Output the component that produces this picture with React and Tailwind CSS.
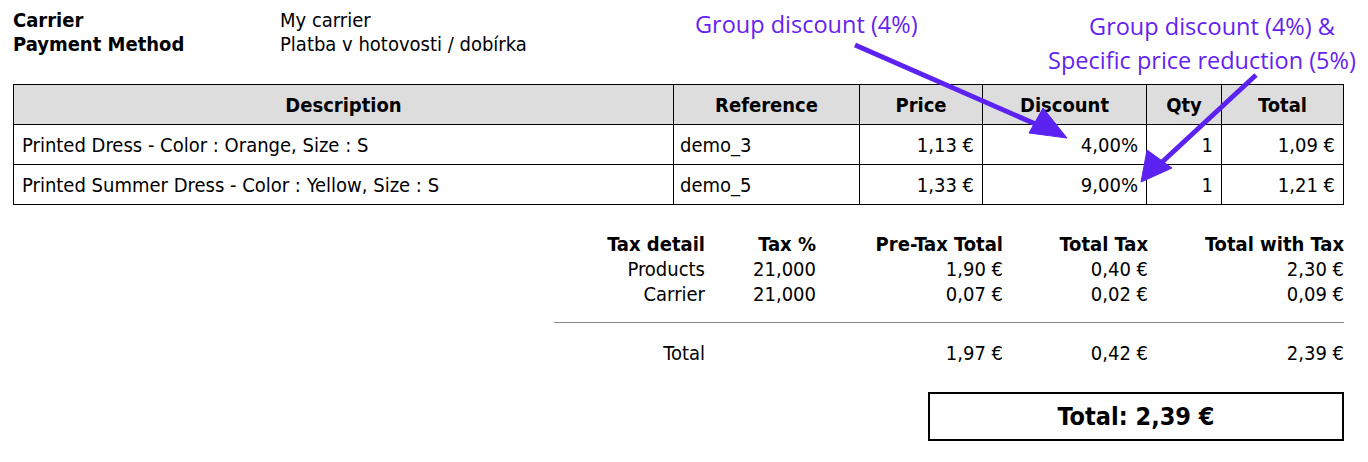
import React from 'react';

const items = [
  { desc: 'Printed Dress - Color : Orange, Size : S', ref: 'demo_3', price: '1,13 €', discount: '4,00%', qty: 1, total: '1,09 €' },
  { desc: 'Printed Summer Dress - Color : Yellow, Size : S', ref: 'demo_5', price: '1,33 €', discount: '9,00%', qty: 1, total: '1,21 €' },
];

const taxRows = [
  { label: 'Products', rate: '21,000', pre: '1,90 €', tax: '0,40 €', total: '2,30 €' },
  { label: 'Carrier', rate: '21,000', pre: '0,07 €', tax: '0,02 €', total: '0,09 €' },
];

function Arrows() {
  return (
    <svg className="absolute inset-0 pointer-events-none" width="1368" height="462">
      <g fill="#5b22f2" stroke="#5b22f2">
        <line x1="855" y1="45" x2="1040" y2="126" strokeWidth="5" />
        <polygon points="1067,138 1029,133 1043,108" strokeWidth="1" />
        <line x1="1256" y1="75" x2="1160" y2="164" strokeWidth="5" />
        <polygon points="1141,182 1147,150 1172,168" strokeWidth="1" />
      </g>
    </svg>
  );
}

export default function App() {
  return (
    <div className="relative w-[1368px] h-[462px] bg-white text-black overflow-hidden [font-family:'DejaVu_Sans_Condensed','DejaVu_Sans',sans-serif] [font-stretch:condensed] text-[20px]">
      {/* Carrier / payment */}
      <div className="pt-[8px] pl-[13px] leading-[24px]">
        <div className="flex">
          <span className="w-[267px] font-bold">Carrier</span>
          <span>My carrier</span>
        </div>
        <div className="flex">
          <span className="w-[267px] font-bold">Payment Method</span>
          <span>Platba v hotovosti / dobírka</span>
        </div>
      </div>

      {/* Annotations */}
      <div className="absolute left-[695px] top-[8px] text-[23.5px] leading-[32px] font-medium text-[#6523f0] [font-family:'Open_Sans',sans-serif] [font-stretch:normal]">
        Group discount (4%)
      </div>
      <div className="absolute left-[1046px] top-[9px] w-[312px] text-center text-[23.5px] leading-[34px] font-medium text-[#6523f0] [font-family:'Open_Sans',sans-serif] [font-stretch:normal]">
        <div className="pl-[20px]">Group discount (4%) &amp;</div>
        <div>Specific price reduction (5%)</div>
      </div>

      {/* Product table */}
      <table className="mt-[28px] ml-[13px] w-[1331px] border-collapse">
        <thead>
          <tr className="bg-[#dddddd] h-[40px]">
            <th className="border border-black w-[660px] font-bold">Description</th>
            <th className="border border-black w-[186px] font-bold">Reference</th>
            <th className="border border-black w-[123px] font-bold">Price</th>
            <th className="border border-black w-[164px] font-bold">Discount</th>
            <th className="border border-black w-[75px] font-bold">Qty</th>
            <th className="border border-black font-bold">Total</th>
          </tr>
        </thead>
        <tbody>
          {items.map(it => (
            <tr key={it.ref} className="h-[40px]">
              <td className="border border-black px-[8px]">{it.desc}</td>
              <td className="border border-black px-[6px]">{it.ref}</td>
              <td className="border border-black px-[8px] text-right">{it.price}</td>
              <td className="border border-black px-[8px] text-right">{it.discount}</td>
              <td className="border border-black px-[8px] text-right">{it.qty}</td>
              <td className="border border-black px-[8px] text-right">{it.total}</td>
            </tr>
          ))}
        </tbody>
      </table>

      {/* Tax detail */}
      <div className="ml-[554px] mt-[27px] w-[790px] leading-[25px]">
        <div className="grid grid-cols-[151px_111px_187px_145px_196px] text-right">
          <span className="font-bold">Tax detail</span>
          <span className="font-bold">Tax %</span>
          <span className="font-bold">Pre-Tax Total</span>
          <span className="font-bold">Total Tax</span>
          <span className="font-bold">Total with Tax</span>
          {taxRows.map(r => (
            <React.Fragment key={r.label}>
              <span>{r.label}</span>
              <span>{r.rate}</span>
              <span>{r.pre}</span>
              <span>{r.tax}</span>
              <span>{r.total}</span>
            </React.Fragment>
          ))}
        </div>
        <div className="mt-[15px] border-t border-[#888888]" />
        <div className="mt-[18px] grid grid-cols-[151px_111px_187px_145px_196px] text-right">
          <span>Total</span>
          <span></span>
          <span>1,97 €</span>
          <span>0,42 €</span>
          <span>2,39 €</span>
        </div>
      </div>

      {/* Grand total */}
      <div className="ml-[928px] mt-[26px] w-[416px] h-[49px] border-2 border-black flex items-center justify-center text-[25px] font-bold">
        Total: 2,39 €
      </div>

      <Arrows />
    </div>
  );
}
